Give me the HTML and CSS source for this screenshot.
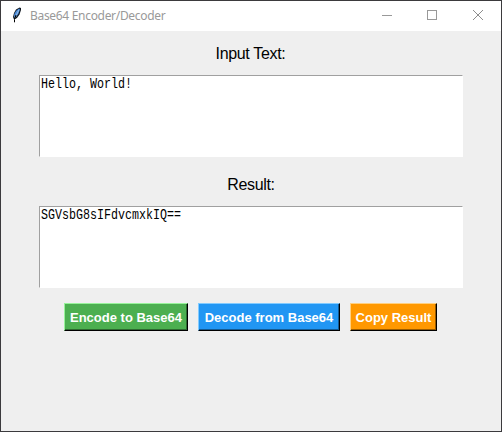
FILE: index.html
```html
<!DOCTYPE html>
<html lang="en">
<head>
<meta charset="utf-8">
<title>Base64 Encoder/Decoder</title>
<link rel="stylesheet" href="styles.css">
</head>
<body>
<div class="window">
  <header class="titlebar">
    <svg class="feather" width="16" height="16" viewBox="0 0 16 16">
      <path d="M10.5 0.5L7 2.5L5 6L4 10L5 12.5L8 11L10.5 7.5L12 3V1z" fill="#111820"/>
      <path d="M10 1.5L7 4L5.3 7L5 10.5L7.5 9.5L9.5 6.5L11 2.5z" fill="#4b8bd8"/>
      <path d="M9.8 3L6 11" stroke="#a9c8e8" stroke-width=".8" fill="none"/>
      <path d="M7 8L5.5 12.5V15.3" stroke="#000" stroke-width="1" fill="none"/>
    </svg>
    <span class="title">Base64 Encoder/Decoder</span>
    <div class="controls">
      <svg width="46" height="30" viewBox="0 0 46 30" shape-rendering="crispEdges"><path d="M18 14.5H28" stroke="#999"/></svg>
      <svg width="45" height="30" viewBox="0 0 45 30" shape-rendering="crispEdges"><rect x="17.5" y="9.5" width="9" height="9" fill="none" stroke="#999"/></svg>
      <svg width="46" height="30" viewBox="0 0 46 30"><path d="M18 9L28 19M28 9L18 19" stroke="#8d8d8d"/></svg>
    </div>
  </header>
  <main class="content">
    <div class="label">Input Text:</div>
    <div class="textbox"><span class="mono">Hello, World!</span></div>
    <div class="label result">Result:</div>
    <div class="textbox"><span class="mono">SGVsbG8sIFdvcmxkIQ==</span></div>
    <div class="buttons">
      <button class="btn encode">Encode to Base64</button>
      <button class="btn decode">Decode from Base64</button>
      <button class="btn copy">Copy Result</button>
    </div>
  </main>
</div>
</body>
</html>
```
FILE: styles.css
```css
* { box-sizing: border-box; }
body { margin: 0; }
.window {
  width: 502px;
  height: 432px;
  border: 1px solid #3b3a3d;
  background: #efefef;
  font-family: "Liberation Sans", Arial, sans-serif;
  color: #000;
}
.titlebar {
  height: 30px;
  background: #fff;
  display: flex;
  align-items: center;
  padding-left: 8px;
}
.feather { margin-top: -2px; }
.title {
  margin-left: 5px;
  font: 12px/16px "Noto Sans", sans-serif;
  letter-spacing: -0.31px;
  color: #999;
}
.controls { display: flex; margin-left: auto; }
.content { padding: 0 38px; }
.label {
  height: 44px;
  padding: 13px 1px 0 0;
  font-size: 16px;
  line-height: 20px;
  letter-spacing: -0.33px;
  text-align: center;
}
.label.result { height: 49px; padding: 18px 0 0; }
.textbox {
  width: 424px;
  height: 82px;
  background: #fff;
  border: 1px solid #fff;
  border-top-color: #a0a0a0;
  border-left-color: #a0a0a0;
  padding: 1px 1px 0;
}
.mono {
  display: block;
  width: max-content;
  font: 15px/16px "Liberation Mono", monospace;
  transform: scaleX(0.7777);
  transform-origin: 0 0;
}
.buttons {
  display: flex;
  gap: 10px;
  margin: 15px 0 0 25px;
}
.btn {
  height: 28px;
  padding: 0;
  border: 1px solid;
  color: #fff;
  font: bold 13px/15px "Liberation Sans", Arial, sans-serif;
  white-space: nowrap;
}
.encode {
  width: 124px;
  background: #4caf50;
  border-color: #98f39b #000 #000 #98f39b;
  box-shadow: inset -1px -1px #2d6930;
}
.decode {
  width: 142px;
  background: #2196f3;
  border-color: #82cbff #000 #000 #82cbff;
  box-shadow: inset -1px -1px #145a92;
}
.copy {
  width: 87px;
  background: #ff9800;
  border-color: #ffd080 #000 #000 #ffd080;
  box-shadow: inset -1px -1px #995b00;
}
```
